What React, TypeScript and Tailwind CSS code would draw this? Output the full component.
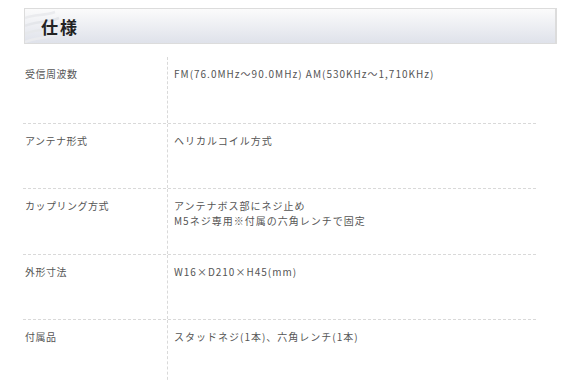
const specs: { label: string; value: string[] }[] = [
  { label: "受信周波数", value: ["FM(76.0MHz～90.0MHz) AM(530KHz～1,710KHz)"] },
  { label: "アンテナ形式", value: ["ヘリカルコイル方式"] },
  { label: "カップリング方式", value: ["アンテナボス部にネジ止め", "M5ネジ専用※付属の六角レンチで固定"] },
  { label: "外形寸法", value: ["W16×D210×H45(mm)"] },
  { label: "付属品", value: ["スタッドネジ(1本)、六角レンチ(1本)"] },
];

function Swirl() {
  return (
    <svg width="40" height="36" viewBox="0 0 40 36" className="absolute left-0 top-0">
      <path d="M0 9 C10 5 20 7 30 3" stroke="#eaebee" strokeWidth="2.5" fill="none" />
      <path d="M0 17 C10 12 22 14 34 9" stroke="#e4e6ea" strokeWidth="2.5" fill="none" />
      <path d="M0 25 C10 20 22 22 36 16" stroke="#e6e8eb" strokeWidth="2.5" fill="none" />
      <path d="M0 33 C12 28 24 30 38 23" stroke="#eaebee" strokeWidth="2.5" fill="none" />
    </svg>
  );
}

export default function App() {
  return (
    <div
      className="w-[580px] h-[381px] overflow-hidden bg-white"
      style={{ fontFamily: '"Noto Sans CJK JP", "Noto Sans", sans-serif' }}
    >
      <div className="pt-2 pl-6 pr-[23px]">
        <div className="relative h-[36px] border border-[#dcdcdc] border-r-2 bg-gradient-to-b from-[#fbfbfb] to-[#dfe2ea] flex items-center pl-4 overflow-hidden">
          <Swirl />
          <h2 className="relative text-[17px] font-bold text-[#222] tracking-[2px] leading-none">仕様</h2>
        </div>
      </div>

      <div className="ml-[23px] w-[513px] mt-[13px]">
        {specs.map((row, i) => (
          <div
            key={row.label}
            className={`flex h-[65.5px] ${i > 0 ? "border-t border-dashed border-[#d9d9d9]" : ""}`}
          >
            <div className="w-[145px] pl-[2px] pt-[9px] text-[10px] leading-[15px] tracking-[0.5px] text-[#555] border-r border-dashed border-[#d9d9d9]">
              {row.label}
            </div>
            <div className="flex-1 pl-[6px] pt-[9px] text-[10px] leading-[15px] tracking-[1px] text-[#555]">
              {row.value.map((v) => (
                <div key={v}>{v}</div>
              ))}
            </div>
          </div>
        ))}
        <div className="flex h-[10px]">
          <div className="w-[145px] border-r border-dashed border-[#d9d9d9]" />
        </div>
      </div>
    </div>
  );
}
